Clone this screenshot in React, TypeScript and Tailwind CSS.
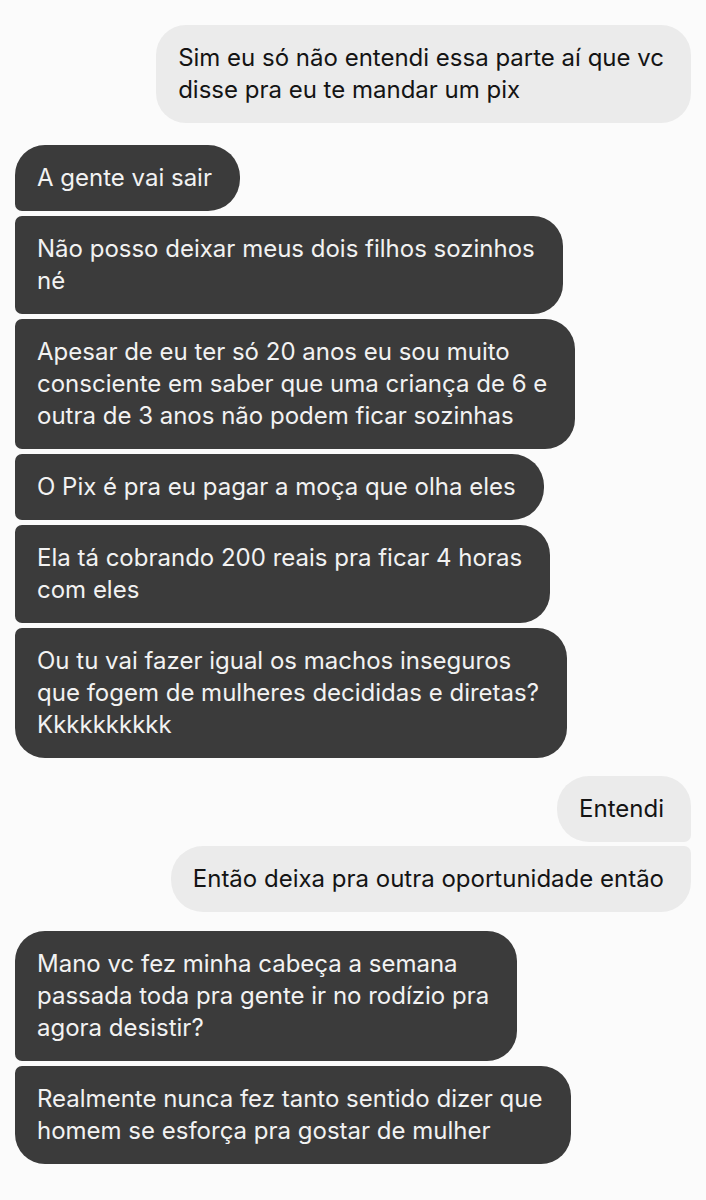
type Msg = { lines: string[]; shape: string };

const font = { fontFamily: 'Inter, "Noto Sans", sans-serif' };

function Received({ lines, shape }: Msg) {
  return (
    <div
      className={`w-fit bg-[#3b3b3b] text-[#f2f2f2] pl-[22px] pr-[28px] py-[17px] text-[24px] leading-[32px] ${shape}`}
    >
      {lines.map((l, i) => (
        <div key={i} className="whitespace-nowrap">{l}</div>
      ))}
    </div>
  );
}

function Sent({ lines, shape }: Msg) {
  return (
    <div
      className={`w-fit self-end bg-[#ebebeb] text-[#141414] pl-[22px] pr-[27px] py-[17px] text-[24px] leading-[32px] ${shape}`}
    >
      {lines.map((l, i) => (
        <div key={i} className="whitespace-nowrap">{l}</div>
      ))}
    </div>
  );
}

export default function App() {
  return (
    <div className="min-h-screen w-[706px] h-[1200px] overflow-hidden bg-[#fbfbfb] px-[15px] pt-[25px]" style={font}>
      <div className="flex flex-col">
        <Sent
          lines={['Sim eu só não entendi essa parte aí que vc', 'disse pra eu te mandar um pix']}
          shape="rounded-[30px]"
        />

        <div className="mt-[22px] flex flex-col gap-[5px]">
          <Received lines={['A gente vai sair']} shape="rounded-r-[32px] rounded-tl-[30px] rounded-bl-[7px]" />
          <Received
            lines={['Não posso deixar meus dois filhos sozinhos', 'né']}
            shape="rounded-r-[30px] rounded-l-[7px]"
          />
          <Received
            lines={[
              'Apesar de eu ter só 20 anos eu sou muito',
              'consciente em saber que uma criança de 6 e',
              'outra de 3 anos não podem ficar sozinhas',
            ]}
            shape="rounded-r-[30px] rounded-l-[7px]"
          />
          <Received lines={['O Pix é pra eu pagar a moça que olha eles']} shape="rounded-r-[32px] rounded-l-[7px]" />
          <Received
            lines={['Ela tá cobrando 200 reais pra ficar 4 horas', 'com eles']}
            shape="rounded-r-[30px] rounded-l-[7px]"
          />
          <Received
            lines={['Ou tu vai fazer igual os machos inseguros', 'que fogem de mulheres decididas e diretas?', 'Kkkkkkkkkk']}
            shape="rounded-r-[30px] rounded-tl-[7px] rounded-bl-[30px]"
          />
        </div>

        <div className="mt-[18px] flex flex-col gap-[4px]">
          <Sent lines={['Entendi']} shape="rounded-l-[32px] rounded-tr-[30px] rounded-br-[7px]" />
          <Sent
            lines={['Então deixa pra outra oportunidade então']}
            shape="rounded-l-[32px] rounded-tr-[7px] rounded-br-[30px]"
          />
        </div>

        <div className="mt-[19px] flex flex-col gap-[5px]">
          <Received
            lines={['Mano vc fez minha cabeça a semana', 'passada toda pra gente ir no rodízio pra', 'agora desistir?']}
            shape="rounded-r-[30px] rounded-tl-[30px] rounded-bl-[7px]"
          />
          <Received
            lines={['Realmente nunca fez tanto sentido dizer que', 'homem se esforça pra gostar de mulher']}
            shape="rounded-r-[30px] rounded-tl-[7px] rounded-bl-[30px]"
          />
        </div>
      </div>
    </div>
  );
}
